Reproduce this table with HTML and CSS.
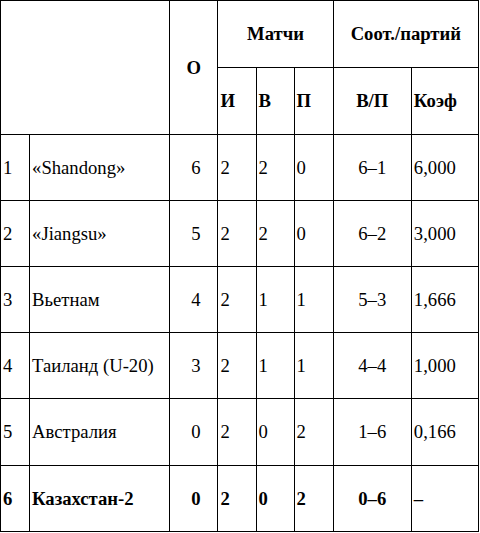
FILE: index.html
```html
<!DOCTYPE html>
<html>
<head>
<meta charset="utf-8">
<link rel="stylesheet" href="styles.css">
</head>
<body>
<table class="standings">
  <colgroup>
    <col class="c-pos"><col class="c-name"><col class="c-pts"><col class="c-m"><col class="c-m"><col class="c-m2"><col class="c-wl"><col class="c-k">
  </colgroup>
  <tr class="h1">
    <th colspan="2" rowspan="2"></th>
    <th rowspan="2" class="center">О</th>
    <th colspan="3" class="center">Матчи</th>
    <th colspan="2" class="center">Соот./партий</th>
  </tr>
  <tr class="h2">
    <th class="left">И</th>
    <th class="left">В</th>
    <th class="left">П</th>
    <th class="center">В/П</th>
    <th class="left">Коэф</th>
  </tr>
  <tr class="r"><td>1</td><td>«Shandong»</td><td class="pts">6</td><td>2</td><td>2</td><td>0</td><td class="center">6–1</td><td>6,000</td></tr>
  <tr class="r"><td>2</td><td>«Jiangsu»</td><td class="pts">5</td><td>2</td><td>2</td><td>0</td><td class="center">6–2</td><td>3,000</td></tr>
  <tr class="r"><td>3</td><td>Вьетнам</td><td class="pts">4</td><td>2</td><td>1</td><td>1</td><td class="center">5–3</td><td>1,666</td></tr>
  <tr class="r"><td>4</td><td>Таиланд (U-20)</td><td class="pts">3</td><td>2</td><td>1</td><td>1</td><td class="center">4–4</td><td>1,000</td></tr>
  <tr class="r r5"><td>5</td><td>Австралия</td><td class="pts">0</td><td>2</td><td>0</td><td>2</td><td class="center">1–6</td><td>0,166</td></tr>
  <tr class="r bold"><td>6</td><td>Казахстан-2</td><td class="pts">0</td><td>2</td><td>0</td><td>2</td><td class="center">0–6</td><td>–</td></tr>
</table>
</body>
</html>
```

FILE: styles.css
```css
html, body {
  margin: 0;
  padding: 0;
  background: #fff;
}
.standings {
  border-collapse: collapse;
  table-layout: fixed;
  width: 479px;
  font-family: "Times New Roman", "Liberation Serif", "DejaVu Serif", serif;
  font-size: 18.67px;
  color: #000;
}
.standings th,
.standings td {
  border: 1px solid #000;
  padding: 0 0 0 2px;
  vertical-align: middle;
  text-align: left;
  white-space: nowrap;
  overflow: hidden;
  font-family: "Times New Roman", "Liberation Serif", "DejaVu Serif", serif;
}
.standings th {
  font-weight: bold;
}
.c-pos { width: 29px; }
.c-name { width: 140px; }
.c-pts { width: 48px; }
.c-m { width: 38px; }
.c-m2 { width: 39px; }
.c-wl { width: 78px; }
.c-k { width: 67px; }
.h1 { height: 67px; }
.h2 { height: 67px; }
.r { height: 66px; }
.r5 { height: 67px; }
.standings .center { text-align: center; padding: 0; }
.standings .pts { text-align: center; padding: 0 0 0 4px; }
.bold td { font-weight: bold; }
```
